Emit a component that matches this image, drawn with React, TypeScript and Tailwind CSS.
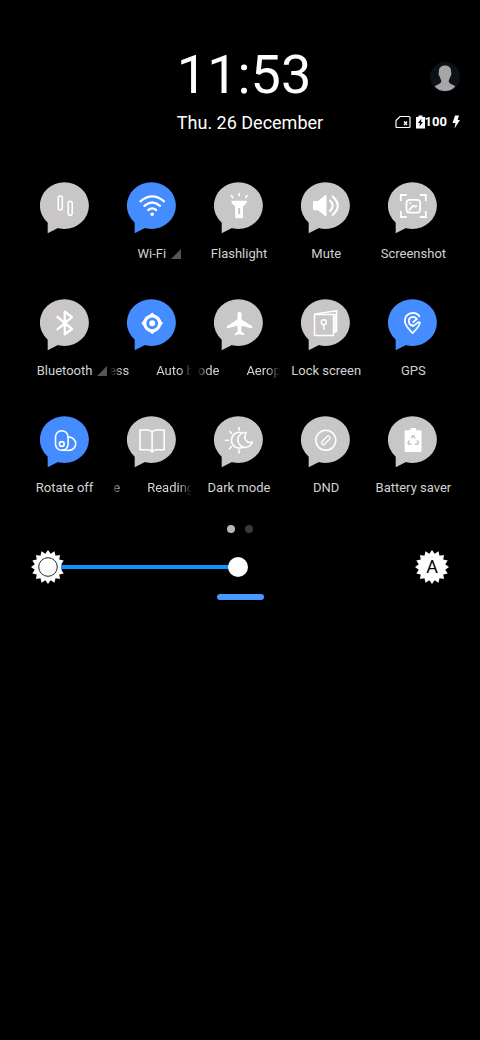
import React, { useState } from 'react';

interface Tile {
  name: string;
  icon: React.ReactNode;
  active?: boolean;
  label?: string;
  expandable?: boolean;
  // a long label scrolls: end of the previous pass, then start of the next one
  scroll?: { tail: string; tailClass: string; head: string };
}

const line = {
  fill: 'none',
  stroke: '#fff',
  strokeWidth: 1.6,
  strokeLinecap: 'round' as const,
  strokeLinejoin: 'round' as const,
};

const DataIcon = (
  <g {...line}>
    <rect x="18.3" y="14" width="4" height="14" rx="2" />
    <rect x="28.2" y="19.3" width="4" height="14" rx="2" />
  </g>
);

const WifiIcon = (
  <g {...line} strokeWidth={2.3}>
    <path d="M13.5 19.3Q25.2 9.5 37 19.3" />
    <path d="M17.4 23.8Q25.2 17.2 33 23.8" />
    <path d="M21.3 28Q25.2 24.8 29.1 28" />
    <circle cx="25.2" cy="32.2" r="1.8" fill="#fff" stroke="none" />
  </g>
);

const FlashlightIcon = (
  <g>
    <path fill="#fff" d="M17.5 18.7h15q.8 0 .5.8l-1 2.3-3 2.8v10.7q0 1-1 1h-5.8q-1 0-1-1V24.6l-3-2.8-1-2.3q-.3-.8.3-.8z" />
    <rect x="24.2" y="26" width="2" height="6" fill="#c8c6c6" />
    <path {...line} d="M25.2 11.5v2.3M17.3 13.5l1.3 2.2M33 13.5l-1.3 2.2" />
  </g>
);

const MuteIcon = (
  <g>
    <path fill="#fff" d="M12 20q0-1 1-1h4l7.2-5.8q1.3-.6 1.3.6v19.6q0 1.2-1.3.6L17 28.200h-4q-1 0-1-1z" />
    <g {...line} strokeWidth={2.2}>
      <path d="M29 18.5q5.4 5.2 0 10.4" />
      <path d="M31.7 14.500q10 9.200 0 18.400" />
    </g>
  </g>
);

const ScreenshotIcon = (
  <g {...line} strokeWidth={1.8}>
    <path strokeLinecap="butt" strokeLinejoin="miter" d="M12.8 19v-6h6M31.8 13h6v6M37.8 29v6h-6M18.8 35h-6v-6" />
    <rect x="18.5" y="17.8" width="13.6" height="12.8" rx="3" />
    <path d="M21.3 28l3.4-3.900q.8-.8 1.700-.1l.6.500q.8.400 1.500-.5" />
    <circle cx="22.200" cy="21.300" r="1" fill="#fff" stroke="none" />
  </g>
);

const BluetoothIcon = (
  <path {...line} strokeWidth={2.4} d="M17.5 17.8L32 30l-7.2 5.3V12.800L32 18.200 17.500 30.300" />
);

const AutoBrightnessIcon = (
  <g>
    <path fill="#fff" d="M25.2 13.400l3.200 3h-6.400zM25.200 35.200l3.200-3h-6.400zM14.300 24.300l3-3.200v6.400zM36.100 24.300l-3-3.200v6.400z" />
    <circle cx="25.2" cy="24.3" r="7.5" fill="none" stroke="#fff" strokeWidth="3.2" />
    <circle cx="25.2" cy="24.3" r="3" fill="#fff" />
  </g>
);

const PlaneIcon = (
  <path
    fill="#fff"
    d="M25.500 12.700c1.500 0 2.100 1.800 2.100 3.300v4.600l9.800 6.100q.9.600.9 1.600v1.100l-10.600-2.600-.5 5.400 2.700 2.300q.5.500.5 1.700l-4.900-1-4.900 1q0-1.200.5-1.700l2.700-2.300-.5-5.400-10.600 2.600v-1.100q0-1 .9-1.600l9.800-6.100V16c0-1.500.6-3.300 2.100-3.300z"
  />
);

const LockScreenIcon = (
  <g {...line} strokeWidth={1.5}>
    <rect x="13.5" y="15.4" width="19" height="21" />
    <path d="M14 15l21.600-3.200v20.700l-2.600.8M34 15.200v17" />
    <circle cx="22.8" cy="23.3" r="2.5" />
    <path d="M22.8 26v4.200" />
  </g>
);

const GpsIcon = (
  <g {...line} strokeWidth={1.8}>
    <path d="M31.400 17.300a8.100 8.100 0 0 0-14.600 4.800c0 4.600 4.300 8.500 7.800 12 3-3 6.300-6.200 7.400-10.500l-1.600-.5-5.300 4-1.500-1.200" />
    <path d="M28.800 20a4.300 4.300 0 1 0-3.600 6.500" />
    <path d="M28.600 20.300l-3.400 2.700" />
  </g>
);

const RotateIcon = (
  <g {...line}>
    <rect x="15.500" y="14.700" width="12.600" height="19.600" rx="6.300" />
    <path d="M28.300 21.200a6.600 6.600 0 1 1 0 13.100H22" />
    <circle cx="21.800" cy="28" r="2.400" />
  </g>
);

const ReadingIcon = (
  <path
    {...line}
    d="M25.100 16.300q-1.400-2.300-4-2.300H13v19.800h8.500q2.300 0 3.600 2.400 1.300-2.400 3.600-2.400h8.500V14h-8.100q-2.600 0-4 2.300zV35.500"
  />
);

const DarkModeIcon = (
  <g {...line}>
    <path d="M25 11.500v2.600M25 34v3M11.500 24.200h2.800M16 15.500l1.600 2M15.500 32.800l1.800-2" />
    <path d="M27.800 16.700a7.900 7.900 0 1 0 0 15" />
    <path d="M32.300 16.600a7.400 7.400 0 1 0 6 9.400c-6.200 2.200-9.300-4-6-9.400z" />
  </g>
);

const DndIcon = (
  <g {...line}>
    <circle cx="24.800" cy="24.300" r="10" />
    <rect x="19.600" y="22.500" width="10.400" height="3.600" rx="1.800" strokeWidth="1.300" transform="rotate(-45 24.800 24.300)" />
  </g>
);

const BatterySaverIcon = (
  <g>
    <path fill="#fff" d="M22.300 12.800q0-.8.8-.8h4.200q.8 0 .8.800v1.500h4.300q1.200 0 1.200 1.200v19.300q0 1.200-1.200 1.200H17.800q-1.200 0-1.200-1.200V15.500q0-1.200 1.200-1.200h4.500z" />
    <path
      fill="none"
      stroke="#c8c6c6"
      strokeWidth="1.600"
      d="M23.300 22.300l1.300-2.400h1.200l1.300 2.400M29 24.500l1.300 2.400-.6 1.300h-2.800M23.500 28.200h-2.800l-.6-1.300 1.300-2.400"
    />
  </g>
);

const tiles: Tile[] = [
  { name: 'Mobile data', icon: DataIcon },
  { name: 'Wi-Fi', label: 'Wi-Fi', icon: WifiIcon, active: true, expandable: true },
  { name: 'Flashlight', label: 'Flashlight', icon: FlashlightIcon },
  { name: 'Mute', label: 'Mute', icon: MuteIcon },
  { name: 'Screenshot', label: 'Screenshot', icon: ScreenshotIcon },
  { name: 'Bluetooth', label: 'Bluetooth', icon: BluetoothIcon, expandable: true },
  {
    name: 'Auto brightness',
    icon: AutoBrightnessIcon,
    active: true,
    scroll: { tail: 'ess', tailClass: 'w-5', head: 'Auto b' },
  },
  {
    name: 'Aeroplane mode',
    icon: PlaneIcon,
    scroll: { tail: 'ode', tailClass: 'w-[23px]', head: 'Aerop' },
  },
  { name: 'Lock screen', label: 'Lock screen', icon: LockScreenIcon },
  { name: 'GPS', label: 'GPS', icon: GpsIcon, active: true },
  { name: 'Rotate off', label: 'Rotate off', icon: RotateIcon, active: true },
  {
    name: 'Reading mode',
    icon: ReadingIcon,
    scroll: { tail: 'e', tailClass: 'w-[11px]', head: 'Reading' },
  },
  { name: 'Dark mode', label: 'Dark mode', icon: DarkModeIcon },
  { name: 'DND', label: 'DND', icon: DndIcon },
  { name: 'Battery saver', label: 'Battery saver', icon: BatterySaverIcon },
];

// 16-toothed badge used at both ends of the brightness row
const badgePoints = Array.from({ length: 32 }, (_, i) => {
  const r = i % 2 === 0 ? 17 : 13.5;
  const a = (i * Math.PI) / 16;
  return `${(17 + r * Math.sin(a)).toFixed(2)},${(17 - r * Math.cos(a)).toFixed(2)}`;
}).join(' ');

const TileLabel: React.FC<{ tile: Tile }> = ({ tile }) => {
  if (tile.scroll) {
    return (
      <span className="flex w-full gap-[27px] overflow-hidden px-px [mask-image:linear-gradient(to_right,transparent_2px,black_14px,black_calc(100%-16px),transparent_calc(100%-3px))]">
        <span className={`flex shrink-0 justify-end ${tile.scroll.tailClass}`}>{tile.scroll.tail}</span>
        <span className="shrink-0">{tile.scroll.head}</span>
      </span>
    );
  }
  return (
    <span className="relative">
      {tile.label}
      {tile.expandable && (
        <svg viewBox="0 0 10 10" className="absolute bottom-[5px] left-full ml-[5px] h-[10px] w-[10px]">
          <path d="M10 0v10H0z" fill="#555" />
        </svg>
      )}
    </span>
  );
};

const TileButton: React.FC<{ tile: Tile }> = ({ tile }) => (
  <button
    type="button"
    aria-label={tile.name}
    aria-pressed={!!tile.active}
    className="flex min-w-0 flex-col items-center gap-[10px]"
  >
    <svg viewBox="0 0 50 52" className="h-[52px] w-[50px]">
      <g fill={tile.active ? '#448cff' : '#c8c6c6'}>
        <ellipse cx="24.400" cy="23.600" rx="24.500" ry="23.300" />
        <path d="M7.700 38v13.300L19 45.500z" />
      </g>
      {tile.icon}
    </svg>
    <span className="flex h-5 w-full justify-center whitespace-nowrap text-[13px] leading-5 text-[#d2d2d2]">
      <TileLabel tile={tile} />
    </span>
  </button>
);

export default function App() {
  const [brightness, setBrightness] = useState(50);

  return (
    <div className="min-h-screen bg-black font-[Roboto,sans-serif] text-white">
      <header className="grid grid-cols-[1fr_auto_1fr] pt-[47px] pl-5">
        <div />
        <div className="flex flex-col gap-2">
          <time className="text-[54px] leading-[56px]">11:53</time>
          <p className="text-lg leading-6">Thu. 26 December</p>
        </div>
        <div className="flex flex-col items-end gap-[18px] pt-[15px] pr-5">
          <button type="button" aria-label="User">
            <svg viewBox="0 0 30 30" className="h-[30px] w-[30px]">
              <circle cx="15" cy="15" r="15" fill="#0d1118" />
              <path
                fill="#a6a6a6"
                d="M15 3.500c4 0 6.300 2.500 6.100 6-.1 1.500.6 1.700.2 3.200-.3 1-.8 1-1 2-.4 1.600-1.300 2.500-1.500 3.800-.2 2.500 1.200 3 3.200 3.900 1.600.7 2.800 1.200 3.300 2.100A14 14 0 0 1 15 29a14 14 0 0 1-10.300-4.500c.5-.9 1.700-1.400 3.300-2.100 2-.9 3.400-1.400 3.200-3.900-.2-1.300-1.100-2.200-1.500-3.800-.2-1-.7-1-1-2-.4-1.500.3-1.700.2-3.200-.2-3.500 2.100-6 6.100-6z"
              />
            </svg>
          </button>
          <div className="flex h-6 items-center">
            <svg viewBox="0 0 16 14" className="mr-[5px] h-[14px] w-4">
              <path d="M5 1.500h9q1 0 1 1v9q0 1-1 1H2q-1 0-1-1V5.500z" fill="none" stroke="#fff" strokeWidth="1.200" />
              <path d="M9 6.500l3 3.500M12 6.500L9 10" stroke="#fff" strokeWidth="1.300" />
            </svg>
            <svg viewBox="0 0 9 14" className="h-[14px] w-[9px]">
              <path d="M2.500.500h4v1.500H9v11.500H0V2h2.500z" fill="#fff" />
              <path d="M5.500 3.500L2 8h2l-.6 3.500L7 7H5z" fill="#000" />
            </svg>
            <span className="text-[13px] leading-6 font-bold">100</span>
            <svg viewBox="0 0 8 14" className="ml-[5px] h-[14px] w-2">
              <path d="M3 .5h4L5.500 5H8L2.500 13.500 3.500 8H.5z" fill="#fff" />
            </svg>
          </div>
        </div>
      </header>

      <main>
        <div className="mt-[47px] grid grid-cols-5 gap-y-[35px] pr-[23px] pl-[21px]">
          {tiles.map((tile) => (
            <TileButton key={tile.name} tile={tile} />
          ))}
        </div>

        <div className="mt-[27px] flex justify-center gap-[10px]">
          <span className="h-2 w-2 rounded-full bg-[#b8b8b8]" />
          <span className="h-2 w-2 rounded-full bg-[#3b3b3b]" />
        </div>

        <div className="mt-[17px] flex items-center px-[31px]">
          <svg viewBox="0 0 34 34" className="h-[34px] w-[34px] shrink-0">
            <polygon points={badgePoints} fill="#fff" />
            <circle cx="17" cy="17" r="9.300" fill="#fff" stroke="#222" strokeWidth="1" />
          </svg>
          <input
            type="range"
            min={0}
            max={100}
            value={brightness}
            onChange={(e) => setBrightness(Number(e.target.value))}
            aria-label="Brightness"
            style={{ backgroundSize: `${brightness}% 4px` }}
            className="relative -ml-1 h-5 min-w-0 flex-1 appearance-none bg-[linear-gradient(#0d92ff,#0d92ff)] bg-left bg-no-repeat [&::-webkit-slider-thumb]:h-5 [&::-webkit-slider-thumb]:w-5 [&::-webkit-slider-thumb]:appearance-none [&::-webkit-slider-thumb]:rounded-full [&::-webkit-slider-thumb]:bg-white"
          />
          <button type="button" aria-label="Auto brightness level" className="relative h-[34px] w-[34px] shrink-0">
            <svg viewBox="0 0 34 34" className="h-[34px] w-[34px]">
              <polygon points={badgePoints} fill="#fff" />
            </svg>
            <span className="absolute inset-0 text-lg leading-[34px] text-black">A</span>
          </button>
        </div>

        <div className="mx-auto mt-[10px] h-[6px] w-[47px] rounded-full bg-[#4599ff]" />
      </main>
    </div>
  );
}
